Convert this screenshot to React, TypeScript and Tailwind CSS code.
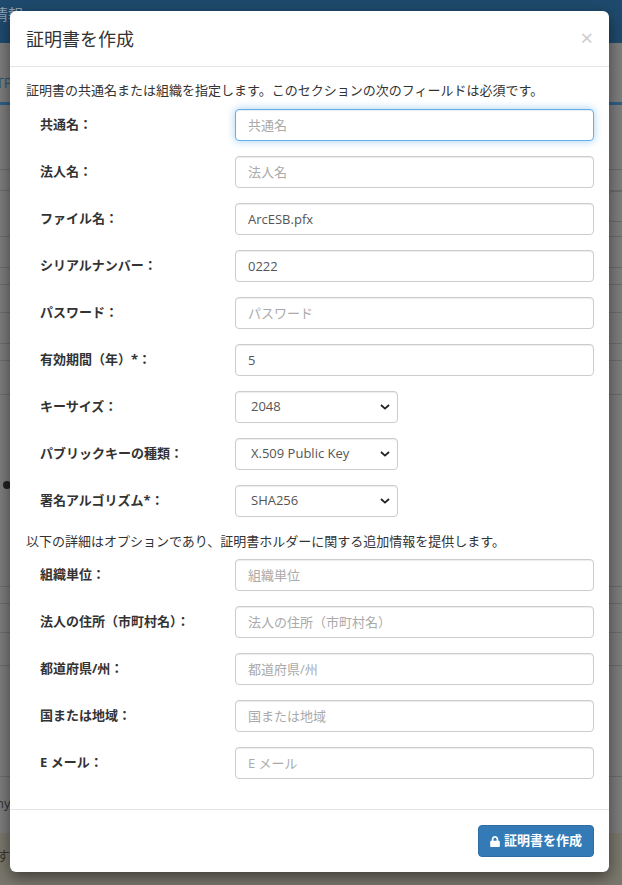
import { FaLock } from "react-icons/fa";

type Field = {
  label: string;
  placeholder?: string;
  value?: string;
  focus?: boolean;
};

const required: Field[] = [
  { label: "共通名：", placeholder: "共通名", focus: true },
  { label: "法人名：", placeholder: "法人名" },
  { label: "ファイル名：", value: "ArcESB.pfx" },
  { label: "シリアルナンバー：", value: "0222" },
  { label: "パスワード：", placeholder: "パスワード" },
  { label: "有効期間（年）*：", value: "5" },
];

const selects = [
  { label: "キーサイズ：", value: "2048", options: ["1024", "2048", "4096"] },
  { label: "パブリックキーの種類：", value: "X.509 Public Key", options: ["X.509 Public Key", "PGP Public Key"] },
  { label: "署名アルゴリズム*：", value: "SHA256", options: ["SHA1", "SHA256", "SHA512"] },
];

const optional: Field[] = [
  { label: "組織単位：", placeholder: "組織単位" },
  { label: "法人の住所（市町村名）：", placeholder: "法人の住所（市町村名）" },
  { label: "都道府県/州：", placeholder: "都道府県/州" },
  { label: "国または地域：", placeholder: "国または地域" },
  { label: "E メール：", placeholder: "E メール" },
];

const Chevron = () => (
  <svg viewBox="0 0 10 6" className="pointer-events-none absolute right-[8px] top-[13px] h-[6px] w-[10px]">
    <path d="M1 1l4 3.6L9 1" fill="none" stroke="#222" strokeWidth="1.8" />
  </svg>
);

const Row = ({ label, children }: { label: string; children: React.ReactNode }) => (
  <div className="mb-[15px] flex h-[32px] items-center">
    <label className="w-[210px] shrink-0 pl-[15px] text-[13px] font-bold text-[#333]">{label}</label>
    {children}
  </div>
);

const TextRow = ({ f }: { f: Field }) => (
  <Row label={f.label}>
    <input
      type="text"
      defaultValue={f.value}
      placeholder={f.placeholder}
      className={`h-[32px] w-[359px] rounded-[4px] border bg-white px-[12px] text-[13px] text-[#555] outline-none placeholder:text-[#aaa] ${
        f.focus
          ? "border-[#66afe9] shadow-[inset_0_1px_1px_rgba(0,0,0,0.075),0_0_8px_rgba(102,175,233,0.6)]"
          : "border-[#ccc] shadow-[inset_0_1px_1px_rgba(0,0,0,0.075)]"
      }`}
    />
  </Row>
);

export default function App() {
  return (
    <div className="relative h-[885px] w-[622px] overflow-hidden bg-[#7d7d7d] font-['Open_Sans','Noto_Sans_CJK_JP',sans-serif]">
      {/* page behind the backdrop */}
      <div className="h-[43px] bg-[#1f4a6d] pt-[4px] text-[15px] leading-[20px] text-[#8ea2b3]">
        <span className="-ml-[7px]">情報</span>
      </div>
      <div className="h-[62px] border-b-[3px] border-[#2f5f87] pt-[30px] text-[14px] leading-[20px] text-[#2d5577]">
        <span className="-ml-[4px]">TP</span>
      </div>
      <div className="h-[65px] border-b border-[#6c6c6c]" />
      <div className="h-[21px] border-b border-[#6c6c6c]" />
      <div className="flex h-[46px] justify-end border-b border-[#6c6c6c]">
        <div className="mr-[-6px] h-[31px] w-[20px] rounded-[4px] border border-[#6a6a6a]" />
      </div>
      <div className="h-[31px] border-b border-[#6c6c6c]" />
      <div className="h-[17px] border-b border-[#6c6c6c]" />
      <div className="h-[28px] border-b border-[#6c6c6c]" />
      <div className="h-[31px] border-b border-[#6c6c6c]" />
      <div className="h-[17px] border-b border-[#6c6c6c]" />
      <div className="h-[34px] border-b border-[#6c6c6c]" />
      <div className="h-[192px] border-b border-[#6c6c6c] pt-[76px]">
        <span className="ml-[3px] inline-block h-[8px] w-[8px] rounded-full bg-[#222]" />
      </div>
      <div className="h-[17px] border-b border-[#6c6c6c]" />
      <div className="h-[29px] border-b border-[#6c6c6c]" />
      <div className="h-[33px] border-b border-[#6c6c6c]" />
      <div className="h-[111px] border-b border-[#6c6c6c]" />
      <div className="h-[56px] pt-[16px] text-[13px] leading-[20px] text-[#333]">
        <span className="-ml-[4px]">ny</span>
      </div>
      <div className="h-[52px] bg-[#7a786c] pt-[13px] text-[14px] leading-[20px] text-[#3a382e]">
        <span className="-ml-[4px]">す</span>
      </div>

      {/* modal */}
      <div className="absolute inset-0 pl-[10px] pt-[11px]">
        <div className="w-[599px] rounded-[6px] bg-white shadow-[0_5px_15px_rgba(0,0,0,0.5)]">
          <div className="flex h-[56px] items-start justify-between border-b border-[#e5e5e5] pl-[16px] pr-[16px] pt-[15px]">
            <h4 className="text-[18px] leading-[26px] text-[#333]">証明書を作成</h4>
            <button className="mt-[-2px] text-[22px] leading-[26px] text-[#cbcbcb]">×</button>
          </div>

          <div className="px-[15px] pb-[15px] pt-[14px]">
            <p className="mb-[10px] pl-[1px] text-[13px] leading-[18px] text-[#333]">
              証明書の共通名または組織を指定します。このセクションの次のフィールドは必須です。
            </p>
            {required.map((f) => (
              <TextRow key={f.label} f={f} />
            ))}
            {selects.map((s) => (
              <Row key={s.label} label={s.label}>
                <div className="relative">
                  <select
                    defaultValue={s.value}
                    className="h-[32px] w-[163px] appearance-none rounded-[4px] border border-[#ccc] bg-white pl-[15px] text-[13px] text-[#555] outline-none shadow-[inset_0_1px_1px_rgba(0,0,0,0.075)]"
                  >
                    {s.options.map((o) => (
                      <option key={o}>{o}</option>
                    ))}
                  </select>
                  <Chevron />
                </div>
              </Row>
            ))}
            <p className="mb-[9px] pl-[1px] text-[13px] leading-[18px] text-[#333]">
              以下の詳細はオプションであり、証明書ホルダーに関する追加情報を提供します。
            </p>
            {optional.map((f) => (
              <TextRow key={f.label} f={f} />
            ))}
          </div>

          <div className="flex justify-end border-t border-[#e5e5e5] p-[15px]">
            <button className="flex h-[32px] w-[116px] items-center justify-center gap-[4px] rounded-[4px] border border-[#2e6da4] bg-[#337ab7] text-[13px] font-bold text-white">
              <FaLock className="h-[11px] w-[10px]" />
              証明書を作成
            </button>
          </div>
        </div>
      </div>
    </div>
  );
}
